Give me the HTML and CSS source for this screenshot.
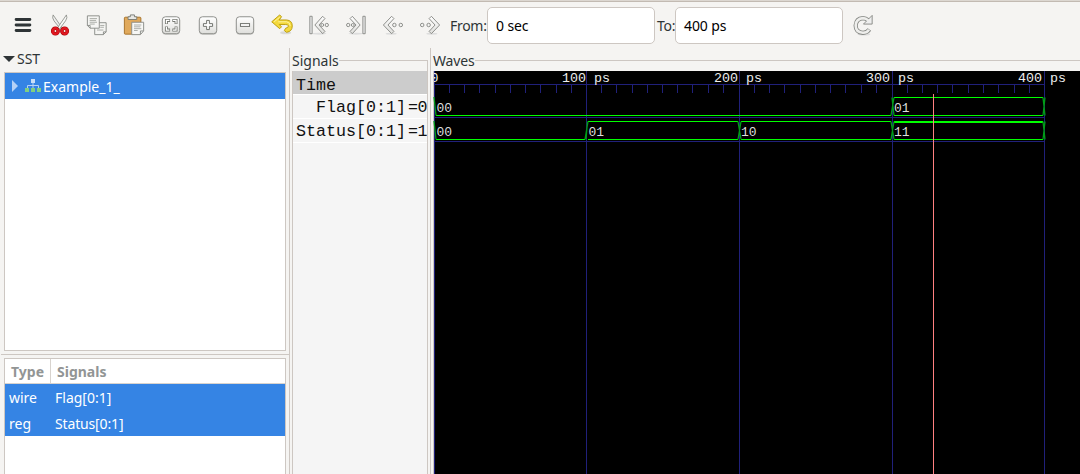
FILE: index.html
```
<!DOCTYPE html>
<html lang="en">
<head>
<meta charset="utf-8">
<title>Waveform viewer</title>
<link rel="stylesheet" href="styles.css">
</head>
<body>
<svg class="defs" viewBox="0 0 24 24"><defs>
  <linearGradient id="metal" x2="0" y2="1"><stop stop-color="#fff"/><stop offset="1" stop-color="#dededb"/></linearGradient>
  <g id="plate"><rect x="2.500" y="4" width="19" height="18.500" rx="3.500" fill="#c8c8c5"/><rect x="2.500" y="3" width="19" height="18.500" rx="3.500" fill="url(#metal)" stroke="#858783"/></g>
  <g id="first"><ellipse cx="12" cy="21.500" rx="8" ry="1" fill="#ddd"/><path d="M2 2.500H4.500V21.500H2Z" fill="#eee" stroke="#858783"/><path d="M16 2.500L7.500 12L16 21.500L18.500 19L12 12L18.500 5Z" fill="url(#metal)" stroke="#858783"/><g fill="#f5f5f3" stroke="#858783"><circle cx="15.500" cy="12" r="1.600"/><circle cx="20.500" cy="12" r="1.800"/></g></g>
  <g id="prev"><ellipse cx="10" cy="21.500" rx="6" ry="1" fill="#ddd"/><path d="M10.500 2.500L1.500 12L10.500 21.500L13 19L6.500 12L13 5Z" fill="url(#metal)" stroke="#858783"/><g fill="#f5f5f3" stroke="#858783"><circle cx="13.500" cy="12" r="1.900"/><circle cx="20.500" cy="12" r="1.900"/></g></g>
</defs></svg>
<div class="app">
  <header class="toolbar">
    <div class="tools">
      <svg class="tool" viewBox="0 0 24 24"><path d="M4.500 6H19.500M4.500 12H19.500M4.500 18H19.500" stroke="#2e3436" stroke-width="3.200" stroke-linecap="round"/></svg>
      <svg class="tool" viewBox="0 0 24 24"><path d="M4.500 1Q3 4 5.500 7.500L13 17L14.500 15.500Z" fill="#eee" stroke="#888a85" stroke-width=".9"/><path d="M19 1Q20.500 4 18 7.500L11 17L9 15.500Z" fill="#f8f8f6" stroke="#888a85" stroke-width=".9"/><g fill="none" stroke="#a40000" stroke-width="3.800"><circle cx="7" cy="18.500" r="3"/><circle cx="17" cy="18.500" r="3"/></g><g fill="none" stroke="#df1822" stroke-width="2.600"><circle cx="7" cy="18.500" r="3"/><circle cx="17" cy="18.500" r="3"/></g></svg>
      <svg class="tool" viewBox="0 0 24 24"><g fill="#f5f5f3" stroke="#888a85"><path d="M9.500 9.500H22V19.500L19 22.500H9.500Z"/><path d="M1.500 2H14.500V15.500H4.500L1.500 12.500Z"/></g><path d="M4 5H12M4 7H11M4 9H12M4 11H9.500M15.500 12.500H20M15.500 14.500H19.500M12 17.500H19" stroke="#a5a7a3"/><path d="M1.500 12.500H4.500V15.500M19 22.500V19.500H22" fill="none" stroke="#888a85"/></svg>
      <svg class="tool" viewBox="0 0 24 24"><rect x="1.500" y="3.500" width="18" height="18.500" rx="1" fill="#e0a95c" stroke="#a36d24"/><path d="M5.500 6V3H8V1H12.500V3H15V6Z" fill="#e8e8e5" stroke="#777973"/><path d="M9.500 9H22.500V18.500L19 22.500H9.500Z" fill="#f7f7f5" stroke="#888a85"/><path d="M12 12H20M12 14H19M12 16H20M12 18H16" stroke="#a5a7a3"/><path d="M19 22V18.500H22" fill="none" stroke="#888a85"/></svg>
      <svg class="tool" viewBox="0 0 24 24"><use href="#plate"/><path d="M11 7H7V11M13.500 7H17.500V11M11 17.500H7V13.500M13.500 17.500H17.500V13.500" fill="none" stroke="#777973" stroke-width="3.200"/><path d="M10.300 7H7V10.300M14.200 7H17.500V10.300M10.300 17.500H7V14.200M14.200 17.500H17.500V14.200" fill="none" stroke="#fff" stroke-width="1.300"/></svg>
      <svg class="tool" viewBox="0 0 24 24"><use href="#plate"/><path d="M10.500 7H13.500V10.500H17V13.500H13.500V17H10.500V13.500H7V10.500H10.500Z" fill="#fff" stroke="#666864"/></svg>
      <svg class="tool" viewBox="0 0 24 24"><use href="#plate"/><rect x="7" y="10.500" width="10" height="3" fill="#fff" stroke="#666864"/></svg>
      <svg class="tool" viewBox="0 0 24 24"><ellipse cx="16" cy="20.500" rx="6" ry="1.600" fill="#d9d9d6"/><path d="M.8 8.500L9.500 1L11.500 3L9 6.500H17Q23.200 7 23.200 13Q23.200 19 17 20L14.500 18L16 15.500Q19 15 19 13Q19 11.500 16 11.500H9L11.500 14L9.500 16Z" fill="#f4d93c" stroke="#b99a08"/><path d="M3.500 8.500L9.500 3.500M8 8.500H17Q21 9 21 13" fill="none" stroke="#fff5a8"/></svg>
      <svg class="tool" viewBox="0 0 24 24"><use href="#first"/></svg>
      <svg class="tool" viewBox="0 0 24 24"><use href="#first" transform="matrix(-1 0 0 1 24 0)"/></svg>
      <svg class="tool" viewBox="0 0 24 24"><use href="#prev"/></svg>
      <svg class="tool" viewBox="0 0 24 24"><use href="#prev" transform="matrix(-1 0 0 1 24 0)"/></svg>
    </div>
    <span class="label from">From:</span><div class="entry">0 sec</div>
    <span class="label to">To:</span><div class="entry">400 ps</div>
    <svg class="tool reload" viewBox="0 0 24 24"><ellipse cx="13" cy="22" rx="7" ry="1.500" fill="#ddd"/><path d="M19 17Q16.500 20.500 12 20.500Q4 20 4 12.500Q4.500 5 12 4.500Q15 4.500 18 7" fill="none" stroke="#858783" stroke-width="4.600"/><path d="M22 1.500V11H12.500L16 7.500L19 4.500Z" fill="#eee" stroke="#858783"/><path d="M18.500 17Q16.500 20.500 12 20.500Q4 20 4 12.500Q4.500 5 12 4.500Q15 4.500 18.500 7.500" fill="none" stroke="#eeeeec" stroke-width="2.800"/></svg>
  </header>
  <main class="panes">
    <aside class="left">
      <div class="sst"><svg class="down" viewBox="0 0 12 8"><path d="M0 1H12L6 7Z" fill="#2e3436"/></svg>SST</div>
      <div class="tree"><div class="node">
        <svg class="caret" viewBox="0 0 6 12"><path d="M0 0L6 6L0 12Z" fill="#b5d1f6"/></svg>
        <svg class="hier" viewBox="0 0 16 14"><path d="M8 4V7M2.500 10V6.500H13.500V10M8 6V10" fill="none" stroke="#b5d1f6"/><rect x="6" y="0" width="4" height="4" fill="#c9def8"/><path d="M0 9H4V13H0ZM6 9H10V13H6ZM12 9H16V13H12Z" fill="#80cf82"/></svg>
        <span>Example_1_</span></div></div>
      <div class="split"></div>
      <div class="table">
        <div class="row head"><span>Type</span><span>Signals</span></div>
        <div class="row"><span>wire</span><span>Flag[0:1]</span></div>
        <div class="row"><span>reg</span><span class="tight">Status[0:1]</span></div>
      </div>
    </aside>
    <section class="signals">
      <div class="caption"><span>Signals</span><i></i></div>
      <div class="list">
        <div class="time">Time</div>
        <div class="sig"><span>Flag[0:1]</span><b>=0</b></div>
        <div class="sig"><span>Status[0:1]</span><b>=1</b></div>
      </div>
    </section>
    <section class="waves">
      <div class="caption"><span class="tight">Waves</span><i></i></div>
      <svg class="plot" viewBox="433 71 647 403">
        <rect x="434" y="71" width="646" height="403" fill="#000"/>
        <g stroke="#20207a" fill="none" shape-rendering="crispEdges">
          <path d="M434 84.500H1044M434 117.500H1044M434 141.500H1044"/>
          <path d="M434.500 71V474M586.500 71V474M739.500 71V474M892.500 71V474M1044.500 71V474"/>
          <path d="M449.500 84v9m15-9v9m15-9v9m16-9v9m15-9v9m15-9v9m15-9v9m16-9v9m15-9v9M601.500 84v9m15-9v9m16-9v9m15-9v9m15-9v9m15-9v9m15-9v9m16-9v9m15-9v9M754.500 84v9m15-9v9m15-9v9m16-9v9m15-9v9m15-9v9m15-9v9m16-9v9m15-9v9M907.500 84v9m15-9v9m15-9v9m15-9v9m16-9v9m15-9v9m15-9v9m16-9v9m15-9v9"/>
        </g>
        <g stroke="#00ff00" fill="none" shape-rendering="crispEdges">
          <path d="M436 115.500H891M894 115.500H1043M894 97.500H1043M436 139.500H585M588 139.500H738M741 139.500H891M894 139.500H1043M588 121.500H738M741 121.500H891"/>
          <path d="M894 122H1043" stroke-width="2"/>
        </g>
        <path d="M434 97L436 115.500M434 121L436 139.500M585 139.500L588 121.500M586 139.500L587.500 121.500M738 121.500L741 139.500M738 139.500L741 121.500M891 115.500L894 97.500M892 97.500L894 115.500M891 121.500L894 139.500M891 139.500L894 121.500M1043 97.500L1045 115.500M1045 97.500L1043 115.500M1043 121.500L1045 139.500M1045 121.500L1043 139.500" fill="none" stroke="#009b18" stroke-width="1.300"/>
        <path d="M933.500 94V474" stroke="#ff8080" shape-rendering="crispEdges"/>
        <svg x="434" y="71" width="646" height="20" viewBox="434 71 646 20"><text class="mark" x="430.500" y="82">0</text></svg>
        <g class="mark"><text x="562" y="82">100 ps</text><text x="714" y="82">200 ps</text><text x="866" y="82">300 ps</text><text x="1018" y="82">400 ps</text></g>
        <g class="value"><text x="436.500" y="112">00</text><text x="894" y="112">01</text><text x="436.500" y="136">00</text><text x="588.500" y="136">01</text><text x="741" y="136">10</text><text x="894" y="136">11</text></g>
      </svg>
    </section>
  </main>
</div>
</body>
</html>
```
FILE: styles.css
```
* { box-sizing: border-box; }
body { margin: 0; overflow: hidden; background: #f5f4f2; color: #2e3436; font: 14px/20px "Noto Sans", "Open Sans", sans-serif; letter-spacing: 0; }
svg { display: block; flex: none; }
.defs { position: absolute; width: 0; height: 0; }
.app { width: 1080px; height: 474px; display: flex; flex-direction: column; }
.toolbar { height: 48px; flex: none; display: flex; border-top: 1px solid #dcd7d1; box-shadow: inset 0 1px #c2bab2; padding: 0 0 0 4px; }
.tools { display: flex; gap: 15px; padding-left: 8px; }
.tool { width: 22px; height: 22px; margin-top: 13px; }
.label { margin-top: 15px; overflow: visible; white-space: nowrap; letter-spacing: -.3px; }
.from { width: 37px; margin-left: 9px; }
.to { width: 18px; margin-left: 2px; }
.entry { width: 168px; height: 37px; margin-top: 6px; background: #fff; border: 1px solid #cdc7c2; border-radius: 5px; padding: 8px; color: #000; letter-spacing: -.1px; }
.reload { margin-left: 9px; }
.panes { flex: 1; display: flex; min-height: 0; }
.left { width: 290px; border-right: 1px solid #cdc7c2; display: flex; flex-direction: column; }
.sst { height: 24px; display: flex; align-items: center; gap: 2px; padding: 0 0 2px 3px; }
.down { width: 12px; height: 8px; }
.tree { width: 282px; height: 279px; margin-left: 4px; border: 1px solid #cdc7c2; background: #fff; }
.node { height: 26px; display: flex; align-items: center; background: #3584e4; color: #fff; padding-left: 7px; }
.node span { padding-top: 1px; }
.caret { width: 6px; height: 12px; }
.hier { width: 16px; height: 14px; margin: 0 2px 0 7px; }
.split { height: 1px; margin: 3px 0 3px 1px; background: #cdc7c2; }
.table { width: 282px; flex: 1; margin-left: 4px; border: 1px solid #cdc7c2; border-bottom: 0; background: #fff; }
.row { height: 26px; display: grid; grid-template-columns: 46px 1fr; background: #3584e4; color: #fff; line-height: 28px; }
.row span { padding-left: 4px; }
.tight, .row .tight { letter-spacing: -.15px; }
.head { height: 25px; background: #fff; color: #929595; font-weight: 700; border-bottom: 1px solid #d8d3ce; line-height: 26px; }
.head span { height: 24px; padding-left: 6px; }
.head span:first-child { border-right: 1px solid #d8d3ce; }
.signals { width: 141px; padding-left: 2px; border-right: 1px solid #cdc7c2; display: flex; flex-direction: column; }
.caption { height: 23px; display: flex; align-items: flex-start; }
.caption span { margin-top: 3px; }
.caption i { flex: 1; height: 11px; margin-top: 12px; border-top: 1px solid #cdc7c2; }
.signals .caption { width: 136px; }
.signals .caption i { border-right: 1px solid #cdc7c2; }
.list { width: 136px; flex: 1; border: 1px solid #cdc7c2; border-width: 0 1px; background: #f5f5f5; font: 16.67px/20px "Liberation Mono", monospace; letter-spacing: 0; color: #111; }
.time { height: 24px; padding: 6px 0 0 3px; line-height: 18px; background: linear-gradient(#ccc 23px, #fff 23px); }
.sig { height: 24px; display: grid; grid-template-columns: 113px 21px; border-bottom: 1px solid #fff; padding-top: 3px; overflow: hidden; }
.sig span { text-align: right; }
.sig b { font-weight: 400; padding-left: 2px; letter-spacing: -.4px; white-space: nowrap; }
.waves { flex: 1; padding-left: 2px; }
.plot { width: 647px; height: 403px; background: #cdc7c2; }
.mark { font: 13.33px "Liberation Mono", monospace; letter-spacing: 0; fill: #eee; }
.value { font: 13px "Liberation Mono", monospace; letter-spacing: 0; fill: #ddd; }
```
